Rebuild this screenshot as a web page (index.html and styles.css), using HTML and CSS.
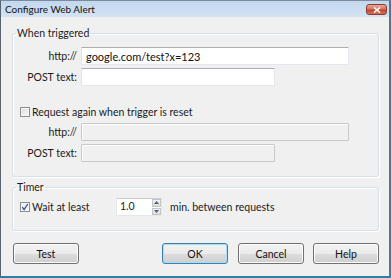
FILE: index.html
```html
<!DOCTYPE html>
<html>
<head>
<meta charset="utf-8">
<link rel="stylesheet" href="styles.css">
</head>
<body>
<div class="window">
  <div class="titlebar">
    <span class="title">Configure Web Alert</span>
    <span class="close"><svg width="8" height="6" viewBox="0 0 8 6"><path d="M1 0.5 L7 5.5 M7 0.5 L1 5.5" stroke="#fff" stroke-width="1.6" fill="none"/></svg></span>
  </div>
  <div class="body">
    <fieldset class="group g1">
      <legend>When triggered</legend>
      <div class="form">
        <label class="lbl">http://</label>
        <input class="field wide" type="text" value="google.com/test?x=123">
        <label class="lbl">POST text:</label>
        <input class="field narrow" type="text" value="">
      </div>
      <div class="check-row">
        <span class="cb"></span>
        <span>Request again when trigger is reset</span>
      </div>
      <div class="form form2">
        <label class="lbl">http://</label>
        <input class="field wide" type="text" value="" disabled>
        <label class="lbl">POST text:</label>
        <input class="field narrow" type="text" value="" disabled>
      </div>
    </fieldset>
    <fieldset class="group g2">
      <legend>Timer</legend>
      <div class="timer-row">
        <span class="cb checked"><svg width="8" height="8" viewBox="0 0 8 8"><path d="M1.3 4.2 L3.1 6.6 L6.8 1" stroke="#2b4f9a" stroke-width="1.3" fill="none"/></svg></span>
        <span class="wait">Wait at least</span>
        <span class="spin">
          <span class="spin-val">1.0</span>
          <span class="spin-btns">
            <span class="sb"><svg width="5" height="3" viewBox="0 0 5 3"><path d="M0 3 L2.5 0 L5 3Z" fill="#4d6185"/></svg></span>
            <span class="sb"><svg width="5" height="3" viewBox="0 0 5 3"><path d="M0 0 L2.5 3 L5 0Z" fill="#4d6185"/></svg></span>
          </span>
        </span>
        <span class="after">min. between requests</span>
      </div>
    </fieldset>
    <div class="buttons">
      <button class="btn">Test</button>
      <span class="spacer"></span>
      <button class="btn default">OK</button>
      <button class="btn">Cancel</button>
      <button class="btn">Help</button>
    </div>
  </div>
</div>
</body>
</html>
```
FILE: styles.css
```css
* { box-sizing: border-box; }
html, body { margin: 0; padding: 0; background: #f0f0f0; }
body {
  font-family: "Lato", "Open Sans", sans-serif;
  font-size: 10px;
  color: #1b1b1b;
}
.window {
  width: 391px;
  height: 278px;
  background: #f0f0f0;
  border-left: 1px solid #59636d;
  border-right: 2px solid #2a86ab;
  border-bottom: 2px solid #2384a8;
  border-top: 1px solid #7d8c9c;
  display: flex;
  flex-direction: column;
}
.titlebar {
  height: 16px;
  flex: none;
  display: flex;
  align-items: center;
  justify-content: space-between;
  padding: 0 2px 0 4px;
  background: linear-gradient(#c3d7ee, #d3e3f3);
}
.title {
  font-size: 10px;
  color: #111;
}
.close {
  width: 21px;
  height: 11px;
  margin-top: 1px;
  border: 1px solid #8d3a2f;
  border-radius: 3px;
  background: linear-gradient(#e6a89b 0%, #d5735f 45%, #c2432b 55%, #d0735c 100%);
  display: flex;
  align-items: center;
  justify-content: center;
}
.body {
  flex: 1;
  padding: 10px 10px 0 11px;
  display: flex;
  flex-direction: column;
}
.group {
  margin: 0;
  padding: 0;
  min-width: 0;
  border: 1px solid #d5dfe5;
  border-radius: 3px;
  box-shadow: inset 1px 1px 0 #fff, 1px 1px 0 #fff;
}
.group legend {
  margin-left: 3px;
  padding: 0 1px;
  line-height: 12px;
  font-size: 10.5px;
}
.g1 { padding: 8px 0 14px 0; }
.g2 { margin-top: 4px; padding: 5px 0 14px 0; }
.form {
  display: grid;
  grid-template-columns: 64px auto;
  column-gap: 4px;
  row-gap: 3px;
  align-items: center;
  justify-items: start;
}
.form2 { margin-top: 5px; }
.lbl {
  justify-self: end;
  font-size: 10.5px;
}
.field {
  height: 18px;
  margin: 0;
  padding: 0 4px;
  border: 1px solid #e3e9ef;
  border-top-color: #abadb3;
  border-left-color: #e2e3ea;
  border-radius: 1px;
  background: #fff;
  font-family: "Lato", "Open Sans", sans-serif;
  font-size: 11px;
  color: #111;
  outline: none;
}
.field.wide { width: 268px; }
.field.narrow { width: 194px; }
.field:disabled {
  background: #f0f0f0;
  border: 1px solid #c6c8cb;
  box-shadow: inset 1px 1px 0 #fff;
}
.check-row {
  margin-top: 20px;
  margin-left: 7px;
  display: flex;
  align-items: center;
  gap: 2px;
  height: 12px;
  font-size: 10.5px;
}
.cb {
  width: 10px;
  height: 10px;
  border: 1px solid #8e8f8f;
  background: linear-gradient(135deg, #dcdcdc, #fbfbfb);
  box-shadow: inset 0 0 0 1px #f4f4f4;
  display: inline-flex;
  align-items: center;
  justify-content: center;
  flex: none;
}
.cb.checked {
  background: linear-gradient(135deg, #e8eaef, #fdfdfd);
}
.timer-row {
  margin-left: 7px;
  display: flex;
  align-items: center;
  height: 18px;
  font-size: 10.5px;
}
.wait { margin-left: 2px; width: 84px; }
.spin {
  display: flex;
  height: 18px;
  width: 46px;
  border: 1px solid #e3e9ef;
  border-top-color: #c9ccd1;
  background: #fff;
}
.spin-val {
  flex: 1;
  padding-left: 3px;
  font-size: 10.5px;
  line-height: 15px;
}
.spin-btns {
  width: 9px;
  display: flex;
  flex-direction: column;
  gap: 1px;
  background: #fff;
}
.sb {
  flex: 1;
  background: linear-gradient(#f3f3f3, #dcdcdc);
  border: 1px solid #c5c5c5;
  display: flex;
  align-items: center;
  justify-content: center;
}
.after { margin-left: 8px; }
.buttons {
  margin-top: 12px;
  display: flex;
  align-items: center;
  gap: 9px;
  padding-left: 1px;
}
.spacer { flex: 1; }
.btn {
  width: 66px;
  height: 21px;
  margin: 0;
  padding: 0;
  border: 1px solid #707070;
  border-radius: 3px;
  background: linear-gradient(#f2f2f2 0%, #ebebeb 50%, #dddddd 51%, #cfcfcf 100%);
  box-shadow: inset 0 0 0 1px #fcfcfc;
  font-family: "Lato", "Open Sans", sans-serif;
  font-size: 10.5px;
  color: #111;
}
.btn.default {
  border-color: #3c7fb1;
  box-shadow: inset 0 0 0 1px #a6dff5;
  margin-right: 1px;
}
```
